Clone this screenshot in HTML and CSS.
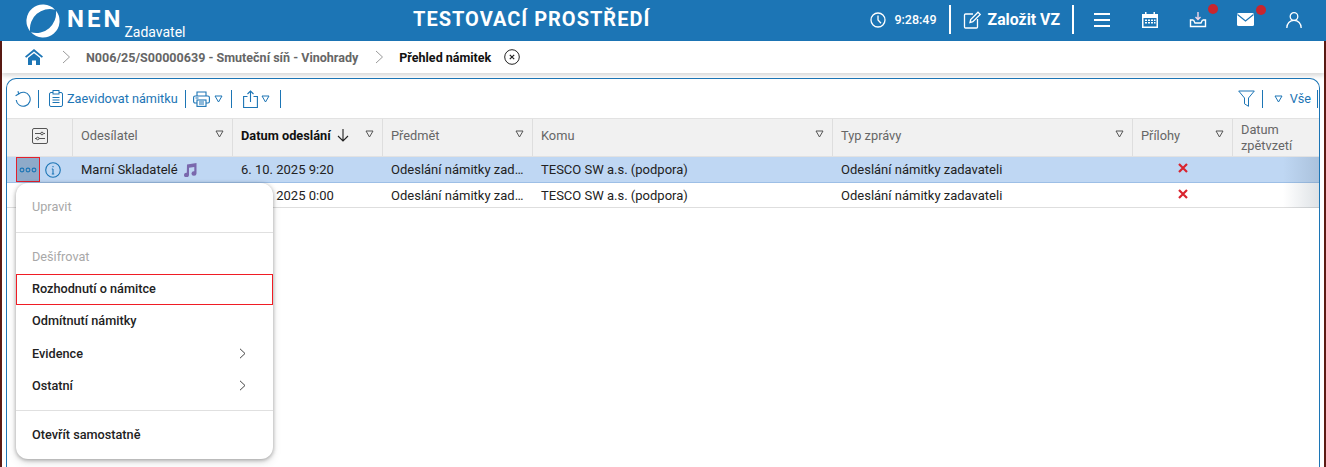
FILE: index.html
```html
<!DOCTYPE html>
<html lang="cs">
<head>
<meta charset="utf-8">
<title>NEN</title>
<link rel="stylesheet" href="styles.css">
</head>
<body>
<header class="top">
  <div class="brand">
    <svg class="logo" width="38" height="38" viewBox="0 0 38 38" fill="#fff"><path d="M31 7.700A16.500 16.500 0 0 0 6 29.200A20 20 0 0 1 31 7.700z"/><path d="M7 30.300A16.500 16.500 0 0 0 32 8.800A20 20 0 0 1 7 30.300z"/></svg>
    <span class="nen">NEN</span>
    <span class="role">Zadavatel</span>
  </div>
  <div class="env">TESTOVACÍ PROSTŘEDÍ</div>
  <div class="tools">
    <svg width="18" height="18" viewBox="0 0 18 18" fill="none" stroke="#fff" stroke-width="1.300"><circle cx="9" cy="9" r="7"/><path d="M9 4.500V9l3 3.200"/></svg>
    <span class="time">9:28:49</span>
    <span class="vbar"></span>
    <svg class="ic-new" width="20" height="20" viewBox="0 0 20 20" fill="none" stroke="#fff" stroke-width="1.300"><path d="M11 4H3.500a1 1 0 0 0-1 1v12a1 1 0 0 0 1 1h11a1 1 0 0 0 1-1V9"/><path d="M8 12.500l.7-3L16 2.200l2.200 2.200-7.300 7.300z"/></svg>
    <span class="create">Založit VZ</span>
    <span class="vbar"></span>
    <svg class="ic-menu" width="18" height="14" viewBox="0 0 18 14" fill="#fff"><rect width="16" height="2"/><rect y="6" width="16" height="2"/><rect y="12" width="16" height="2"/></svg>
    <svg class="ic-cal" width="18" height="18" viewBox="0 0 18 18" fill="#fff"><path d="M1 3h3V1h1.500v2h7V1H14v2h3v14H1zM2.500 7v8.500h13V7z"/><path d="M4 8.500h2V10H4zM7 8.500h2V10H7zM10 8.500h2V10h-2zM13 8.500h1.500V10H13zM4 11h2v1.500H4zM7 11h2v1.500H7zM10 11h2v1.500h-2zM13 11h1.500v1.500H13z"/></svg>
    <span class="badged ic-dl">
      <svg width="18" height="18" viewBox="0 0 18 18" fill="none" stroke="#fff" stroke-width="1.400"><path d="M9 1v7M6.500 6L9 8.500 11.500 6" stroke="#f3d6e6"/><path d="M4.500 9H1.500v6.500h15V9h-3"/><path d="M4.500 9l1.500 3h6l1.500-3"/></svg>
      <i class="dot"></i>
    </span>
    <span class="badged ic-mail">
      <svg width="18" height="14" viewBox="0 0 18 14"><rect width="17" height="13" rx="1.500" fill="#fff"/><path d="M.5 1.500L8.500 8l8-6.500" fill="none" stroke="#1c75b5" stroke-width="1.200"/></svg>
      <i class="dot"></i>
    </span>
    <svg class="ic-user" width="18" height="18" viewBox="0 0 18 18" fill="none" stroke="#fff" stroke-width="1.300"><circle cx="9" cy="5.500" r="3.800"/><path d="M1.800 17c0-4.500 3-7.700 7.200-7.700s7.200 3.200 7.200 7.700"/></svg>
  </div>
</header>
<div class="content">
  <nav class="crumbs">
    <svg width="18" height="16" viewBox="0 0 18 16" fill="#1c75b5"><path d="M9 0L0 7.500 1.200 8.800 9 2.500l7.800 6.300L18 7.500z"/><path d="M3 9l6-4.800L15 9v7h-4v-4.500H7V16H3z"/></svg>
    <svg class="chev" width="9" height="14" viewBox="0 0 9 14" fill="none" stroke="#9a9a9a"><path d="M1 1l6.500 6L1 13"/></svg>
    <span class="crumb">N006/25/S00000639 - Smuteční síň - Vinohrady</span>
    <svg class="chev" width="9" height="14" viewBox="0 0 9 14" fill="none" stroke="#9a9a9a"><path d="M1 1l6.500 6L1 13"/></svg>
    <span class="crumb-now">Přehled námitek</span>
    <svg class="close" width="16" height="16" viewBox="0 0 16 16" fill="none" stroke="#222"><circle cx="8" cy="8" r="7.300"/><path d="M5.800 5.800l4.400 4.400M10.200 5.800l-4.400 4.400" stroke-width="1.200"/></svg>
  </nav>
  <section class="panel">
    <div class="toolbar">
      <svg width="16" height="16" viewBox="0 0 16 16" fill="none" stroke="#1c75b5" stroke-width="1.100"><path d="M3.500 3A7 7 0 1 1 1.200 9"/><path d="M.6 4.800l3-1.800-.6-2.800"/></svg>
      <span class="sep"></span>
      <svg class="tb-clip" width="14" height="17" viewBox="0 0 14 17" fill="none" stroke="#1c75b5"><rect x=".5" y="2.500" width="13" height="14" rx="1.500"/><rect x="4" y=".5" width="6" height="3.500" fill="#fff"/><path d="M3.500 7.500h7M3.500 10h7M3.500 12.500h7"/></svg>
      <span class="tb-label">Zaevidovat námitku</span>
      <span class="sep"></span>
      <svg width="17" height="16" viewBox="0 0 17 16" fill="none" stroke="#1c75b5" stroke-width="1.100"><path d="M4 5V1h9v4"/><rect x=".6" y="5" width="15.800" height="7" rx="1.500"/><rect x="4" y="9" width="9" height="6.400" fill="#fff"/><path d="M6 11h5M6 13h5M2.500 7h3"/></svg>
      <svg class="tri tri-print" width="9" height="8" viewBox="0 0 9 8" fill="none" stroke="#1c75b5"><path d="M1 1h7L4.500 7z"/></svg>
      <span class="sep"></span>
      <svg class="tb-share" width="15" height="18" viewBox="0 0 15 18" fill="none" stroke="#1c75b5" stroke-width="1.100"><path d="M4.500 6.500H.6v11h13.800v-11h-3.900"/><path d="M7.500 12V1M4.500 4l3-3 3 3"/></svg>
      <svg class="tri tri-share" width="9" height="8" viewBox="0 0 9 8" fill="none" stroke="#1c75b5"><path d="M1 1h7L4.500 7z"/></svg>
      <span class="sep sep-end"></span>
      <span class="spacer"></span>
      <svg width="17" height="17" viewBox="0 0 17 17" fill="none" stroke="#1c75b5"><path d="M.7 1h15.600l-5.800 7v8.300l-4-2.500V8z"/></svg>
      <span class="sep sep-all"></span>
      <svg class="tri tri-all" width="9" height="8" viewBox="0 0 9 8" fill="none" stroke="#1c75b5"><path d="M1 1h7L4.500 7z"/></svg>
      <span class="tb-label all">Vše</span>
      <span class="sep sep-last"></span>
    </div>
    <div class="table">
      <div class="row head">
        <div class="cell c-tool"><svg width="16" height="16" viewBox="0 0 16 16" fill="none" stroke="#555"><rect x=".5" y=".5" width="15" height="15" rx="1.500"/><path d="M3 5.500h6M11.500 5.500H13M3 10.500h1.500M7 10.500h6"/><circle cx="10" cy="5.500" r="1.300"/><circle cx="5.700" cy="10.500" r="1.300"/></svg></div>
        <div class="cell">Odesílatel<svg class="ftri" width="9" height="8" viewBox="0 0 9 8" fill="none" stroke="#555"><path d="M1 1h7L4.500 7z"/></svg></div>
        <div class="cell sorted">Datum odeslání<svg class="arrow" width="12" height="14" viewBox="0 0 12 14" fill="none" stroke="#222" stroke-width="1.100"><path d="M6 1v12M1 8l5 5 5-5"/></svg><svg class="ftri" width="9" height="8" viewBox="0 0 9 8" fill="none" stroke="#555"><path d="M1 1h7L4.500 7z"/></svg></div>
        <div class="cell">Předmět<svg class="ftri" width="9" height="8" viewBox="0 0 9 8" fill="none" stroke="#555"><path d="M1 1h7L4.500 7z"/></svg></div>
        <div class="cell">Komu<svg class="ftri" width="9" height="8" viewBox="0 0 9 8" fill="none" stroke="#555"><path d="M1 1h7L4.500 7z"/></svg></div>
        <div class="cell">Typ zprávy<svg class="ftri" width="9" height="8" viewBox="0 0 9 8" fill="none" stroke="#555"><path d="M1 1h7L4.500 7z"/></svg></div>
        <div class="cell">Přílohy<svg class="ftri" width="9" height="8" viewBox="0 0 9 8" fill="none" stroke="#555"><path d="M1 1h7L4.500 7z"/></svg></div>
        <div class="cell two">Datum zpětvzetí</div>
      </div>
      <div class="row data selected">
        <div class="cell c-act">
          <span class="more"><svg width="18" height="6" viewBox="0 0 18 6" fill="none" stroke="#1c75b5" stroke-width="1.100"><circle cx="3" cy="3" r="1.900"/><circle cx="9" cy="3" r="1.900"/><circle cx="15" cy="3" r="1.900"/></svg></span>
          <svg width="16" height="16" viewBox="0 0 16 16" fill="none" stroke="#1c75b5" stroke-width="1.100"><circle cx="8" cy="8" r="7.300"/><path d="M8 7v5M6.800 12h2.400M6.800 7H8M8 4v1.200"/></svg>
        </div>
        <div class="cell">Marní Skladatelé<svg class="note" width="14" height="14" viewBox="0 0 14 14" fill="#7a68ad"><path d="M4 1.500L13.500 0v10.500a2.500 2.200 0 1 1-2.200-2.200V4L6 4.800V12a2.500 2.200 0 1 1-2.200-2.200z"/></svg></div>
        <div class="cell">6. 10. 2025 9:20</div>
        <div class="cell"><span class="trunc">Odeslání námitky zadavateli</span></div>
        <div class="cell">TESCO SW a.s. (podpora)</div>
        <div class="cell">Odeslání námitky zadavateli</div>
        <div class="cell c-x"><svg width="10" height="10" viewBox="0 0 10 10" stroke="#d9232e" stroke-width="2.200"><path d="M1 1l8 8M9 1l-8 8"/></svg></div>
        <div class="cell"></div>
      </div>
      <div class="row data">
        <div class="cell c-act"></div>
        <div class="cell"></div>
        <div class="cell">6. 10. 2025 0:00</div>
        <div class="cell"><span class="trunc">Odeslání námitky zadavateli</span></div>
        <div class="cell">TESCO SW a.s. (podpora)</div>
        <div class="cell">Odeslání námitky zadavateli</div>
        <div class="cell c-x"><svg width="10" height="10" viewBox="0 0 10 10" stroke="#d9232e" stroke-width="2.200"><path d="M1 1l8 8M9 1l-8 8"/></svg></div>
        <div class="cell"></div>
      </div>
      <div class="edge-shade"></div>
    </div>
    <div class="menu">
      <div class="mi off">Upravit</div>
      <hr class="div">
      <div class="mi off">Dešifrovat</div>
      <div class="mi hot">Rozhodnutí o námitce</div>
      <div class="mi">Odmítnutí námitky</div>
      <div class="mi evid">Evidence<svg width="7" height="11" viewBox="0 0 7 11" fill="none" stroke="#444"><path d="M1 .8l5 4.700-5 4.700"/></svg></div>
      <div class="mi">Ostatní<svg width="7" height="11" viewBox="0 0 7 11" fill="none" stroke="#444"><path d="M1 .8l5 4.700-5 4.700"/></svg></div>
      <hr class="div div2">
      <div class="mi">Otevřít samostatně</div>
    </div>
  </section>
</div>
</body>
</html>
```
FILE: styles.css
```css
* { box-sizing: border-box; }
html, body { margin: 0; height: 100%; overflow: hidden; }
body { font-family: Roboto, "Liberation Sans", sans-serif; font-size: 13px; color: #222; background: #fff; }
svg { flex: none; display: block; }

.top { height: 41px; background: #1c75b5; color: #fff; display: flex; }
.brand { width: 413px; flex: none; display: flex; align-items: center; padding-left: 24px; }
.nen { font-size: 24px; font-weight: 700; letter-spacing: 3px; margin-left: 5px; margin-top: -3px; line-height: 30px; }
.role { font-size: 14px; align-self: flex-end; margin-left: 1px; line-height: 17px; }
.env { font-size: 20px; font-weight: 700; letter-spacing: 1px; height: 39px; line-height: 39px; }
.tools { flex: 1; display: flex; align-items: center; justify-content: flex-end; height: 39px; padding-right: 23px; }
.time { font-size: 12.500px; font-weight: 500; margin-left: 7px; }
.vbar { width: 2px; height: 29px; background: #fff; margin-left: 12px; }
.ic-new { margin-left: 11px; }
.create { font-size: 15.800px; font-weight: 700; margin-left: 6px; }
.ic-menu { margin-left: 20px; }
.ic-cal { margin-left: 29px; }
.badged { position: relative; display: block; margin-left: 30px; }
.ic-user { margin-left: 30px; }
.dot { position: absolute; width: 10px; height: 10px; border-radius: 50%; background: #c8262e; top: -7px; right: -11px; }
.ic-mail .dot { top: -8px; }

.content { height: 426px; border-left: 2px solid #5c1b14; border-right: 2px solid #5c1b14; position: relative; }
.crumbs { height: 32px; display: flex; align-items: center; background: #fff; box-shadow: 0 3px 4px rgba(0,0,0,.14); padding-left: 23px; position: relative; }
.chev { margin-left: 19px; }
.crumb { font-weight: 700; font-size: 12.540px; color: #666; margin-left: 15px; }
.crumb + .chev { margin-left: 17px; }
.crumb-now { font-weight: 700; font-size: 12.500px; color: #111; margin-left: 15px; }
.close { margin-left: 13px; }

.panel { position: relative; margin: 5px 4px 0 4px; height: 395px; border: 1px solid #1c75b5; border-bottom: 0; border-radius: 10px 10px 0 0; }
.toolbar { height: 39px; display: flex; align-items: center; padding: 0 1px 0 8px; color: #1c75b5; }
.sep { width: 1px; height: 18px; background: #1c75b5; margin: 0 7px; }
.tb-label { font-size: 12.700px; margin-left: 5px; }
.tb-clip { margin-left: 3px; }
.tb-clip + .tb-label { margin-left: 4px; }
.tri { margin-left: 3px; }
.tri-print { margin: 0 1px 0 4px; }
.tb-share { margin-left: 4px; }
.tri-share { margin-left: 3px; }
.sep-end { margin-left: 10px; }
.sep-all { margin-right: 8px; }
.tb-label.all { margin-left: 7px; }
.sep-last { margin: 0 0 0 6px; }
.spacer { flex: 1; }
.table { position: relative; }
.row { display: grid; grid-template-columns: 66px 160px 150px 150px 300px 300px 100px 86px; }
.head { height: 39px; background: #f1f1f1; color: #666; font-size: 12.800px; border-top: 1px solid #e2e2e2; border-bottom: 1px solid #e2e2e2; }
.head .cell { display: flex; align-items: center; padding: 0 8px 5px; border-right: 1px solid #dedede; position: relative; }
.head .c-tool { justify-content: center; padding: 0 0 3px; }
.ftri { position: absolute; right: 8px; top: 11px; }
.sorted { color: #111; font-weight: 700; }
.arrow { margin-left: 6px; }
.head .two { line-height: 16px; border-right: 0; padding-bottom: 0; }
.data { height: 25px; border-bottom: 1px solid #dedede; }
.data .cell { display: flex; align-items: center; padding: 0 8px; color: #222; }
.selected { height: 26px; background: #bfd7f3; border-bottom: 1px solid #9dbfe6; }
.data .c-act { padding: 0; gap: 5px; }
.more { width: 24px; height: 25px; margin-left: 9px; background: #8eaac9; border: 1px solid #e3202c; display: flex; align-items: center; justify-content: center; }
.note { margin-left: 5px; }
.trunc { display: block; width: 134px; overflow: hidden; white-space: nowrap; text-overflow: ellipsis; }
.data .c-x { justify-content: center; padding-bottom: 3px; }
.edge-shade { position: absolute; right: 0; top: 39px; bottom: 0; width: 36px; background: linear-gradient(to right, rgba(90,110,130,0), rgba(90,110,130,.2)); }

.menu { position: absolute; left: 9px; top: 104px; width: 257px; height: 276px; background: #fff; border-radius: 12px; box-shadow: 0 1px 4px rgba(0,0,0,.35), 0 4px 10px rgba(0,0,0,.1); padding-top: 7px; }
.mi { height: 32px; display: flex; align-items: center; justify-content: space-between; padding: 0 27px 0 16px; font-weight: 500; color: #222; font-size: 12.700px; }
.mi.off { color: #a8a8a8; font-weight: 400; }
.mi.hot { height: 31px; border: 1px solid #f01c24; margin: 2px 0 -1px; padding: 0 26px 2px 15px; }
.mi.evid { margin-top: 1px; }
.div { border: 0; border-top: 1px solid #e0e0e0; margin: 10px 0 7px; }
.div2 { margin-top: 9px; }
```
